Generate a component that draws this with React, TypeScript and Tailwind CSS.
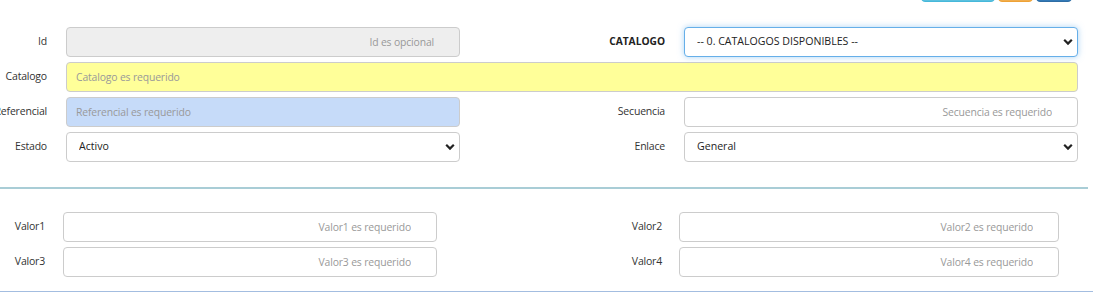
import React from "react"

const font = { fontFamily: '"Open Sans", "Noto Sans", sans-serif' }

function Chevron() {
  return (
    <svg
      width="10"
      height="7"
      viewBox="0 0 10 7"
      className="pointer-events-none absolute right-[5px] top-1/2 -translate-y-1/2"
    >
      <path d="M1.2 1.3l3.8 3.8 3.8-3.8" fill="none" stroke="#222" strokeWidth="2.2" />
    </svg>
  )
}

function Label({ text, bold }: { text: string; bold?: boolean }) {
  return (
    <div className="flex justify-end pr-[19px]">
      <label
        className={
          "whitespace-nowrap " +
          (bold
            ? "font-bold text-[10.2px] text-[#222]"
            : "text-[10.5px] tracking-[-0.2px] text-[#333]")
        }
      >
        {text}
      </label>
    </div>
  )
}

function Field({
  placeholder,
  right,
  bg = "bg-white",
}: {
  placeholder: string
  right?: boolean
  bg?: string
}) {
  return (
    <input
      placeholder={placeholder}
      className={
        "h-[30px] w-full rounded-[4px] border border-[#cccccc] text-[10.4px] tracking-[-0.15px] text-[#333] placeholder:text-[#999] outline-none " +
        bg +
        (right ? " text-right pr-[25px] pl-[9px]" : " pl-[9px] pr-[9px]")
      }
      style={font}
    />
  )
}

function Select({ options, focus }: { options: string[]; focus?: boolean }) {
  return (
    <div className="relative w-full">
      <select
        className={
          "h-[30px] w-full appearance-none rounded-[4px] border bg-white pl-[12px] text-[10.6px] text-[#222] outline-none " +
          (focus
            ? "border-[#66afe9] shadow-[0_0_6px_rgba(102,175,233,0.55)]"
            : "border-[#cccccc]")
        }
        style={font}
      >
        {options.map((o) => (
          <option key={o}>{o}</option>
        ))}
      </select>
      <Chevron />
    </div>
  )
}

function SmallLabel({ text, pr }: { text: string; pr: string }) {
  return (
    <label className={"pb-[1px] text-right text-[10.5px] tracking-[-0.2px] text-[#333] " + pr}>
      {text}
    </label>
  )
}

export default function App() {
  return (
    <div className="w-[1093px] h-[292px] overflow-hidden bg-white" style={font}>
      {/* TOOLBAR */}
      <div className="flex justify-start pl-[921px] gap-[3px] -mt-[28px]">
        <button className="h-[30px] w-[74px] rounded-[4px] border border-[#46b8da] bg-[#5bc0de]" />
        <button className="h-[30px] w-[35px] rounded-[4px] border border-[#eea236] bg-[#f0ad4e]" />
        <button className="h-[30px] w-[36px] rounded-[4px] border border-[#2e6da4] bg-[#337ab7]" />
      </div>

      {/* MAIN FORM */}
      <div className="mt-[25px] grid grid-cols-[66px_394px_224px_394px] gap-y-[5px] items-center">
        <Label text="Id" />
        <Field placeholder="Id es opcional" right bg="bg-[#eeeeee]" />
        <Label text="CATALOGO" bold />
        <Select options={["-- 0. CATALOGOS DISPONIBLES --"]} focus />

        <Label text="Catalogo" />
        <div className="col-span-3">
          <Field placeholder="Catalogo es requerido" bg="bg-[#ffff99]" />
        </div>

        <Label text="Referencial" />
        <Field placeholder="Referencial es requerido" bg="bg-[#c6dbf9]" />
        <Label text="Secuencia" />
        <Field placeholder="Secuencia es requerido" right />

        <Label text="Estado" />
        <Select options={["Activo", "Inactivo"]} />
        <Label text="Enlace" />
        <Select options={["General"]} />
      </div>

      {/* DIVIDER */}
      <div className="mt-[25px] h-[2px] w-[1088px] bg-[#a9cdd6]" />

      {/* VALORES */}
      <div className="mt-[23px] grid grid-cols-[63px_374px_242px_380px] gap-y-[5px] items-center pb-[14px] border-b border-[#a3bde0]">
        <SmallLabel text="Valor1" pr="pr-[18px]" />
        <Field placeholder="Valor1 es requerido" right />
        <SmallLabel text="Valor2" pr="pr-[17px]" />
        <Field placeholder="Valor2 es requerido" right />

        <SmallLabel text="Valor3" pr="pr-[18px]" />
        <Field placeholder="Valor3 es requerido" right />
        <SmallLabel text="Valor4" pr="pr-[17px]" />
        <Field placeholder="Valor4 es requerido" right />
      </div>
    </div>
  )
}
